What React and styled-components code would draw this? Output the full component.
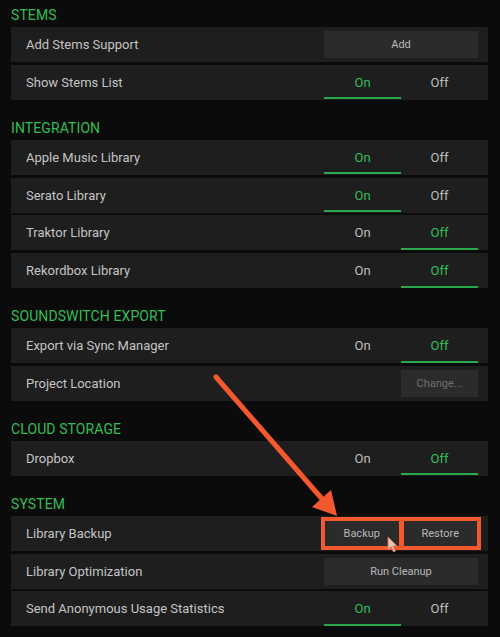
import React from "react";
import styled, { createGlobalStyle, css } from "styled-components";

const Global = createGlobalStyle`
  html, body { margin: 0; padding: 0; background: #0b0b0b; }
  body { font-family: Roboto, "Noto Sans", "Liberation Sans", sans-serif; }
`;

const GREEN = "#33bd58";
const ORANGE = "#f3582e";

const Page = styled.div`
  position: relative;
  width: 500px;
  height: 637px;
  overflow: hidden;
  box-sizing: border-box;
  padding: 4px 12px 0 11px;
  background: #0b0b0b;
`;

const Section = styled.section`
  margin-bottom: 17px;
`;

const SectionTitle = styled.h2`
  margin: 0 0 1px 0;
  height: 22px;
  line-height: 22px;
  font-size: 14px;
  font-weight: 400;
  color: ${GREEN};
  letter-spacing: 0.1px;
`;

const RowList = styled.div`
  display: flex;
  flex-direction: column;
  gap: 2.75px;
`;

const Row = styled.div`
  height: 35px;
  background: #1e1e1e;
  display: flex;
  align-items: center;
  justify-content: space-between;
  padding: 0 10px 0 15px;
`;

const Label = styled.span`
  font-size: 13px;
  color: #c4c4c4;
`;

const Control = styled.div`
  width: 154px;
  height: 100%;
  display: flex;
  align-items: center;
  gap: ${(p) => p.$gap || 0}px;
  justify-content: ${(p) => (p.$end ? "flex-end" : "flex-start")};
`;

const Option = styled.div`
  flex: 1;
  height: 100%;
  position: relative;
  display: flex;
  align-items: center;
  justify-content: center;
  font-size: 13px;
  color: ${(p) => (p.$active ? GREEN : "#bdbdbd")};
  ${(p) =>
    p.$active &&
    css`
      &::after {
        content: "";
        position: absolute;
        left: 0;
        right: 0;
        bottom: 0.5px;
        height: 2px;
        background: #2aa84c;
      }
    `}
`;

const Button = styled.div`
  flex: ${(p) => (p.$half ? "0 0 77px" : "1")};
  height: 27px;
  background: #2b2b2b;
  display: flex;
  align-items: center;
  justify-content: center;
  font-size: 11px;
  color: ${(p) => (p.$disabled ? "#6f6f6f" : "#b9b9b9")};
  ${(p) =>
    p.$marked &&
    css`
      outline: 4px solid ${ORANGE};
      outline-offset: -1px;
    `}
`;

const Overlay = styled.svg`
  position: absolute;
  left: 0;
  top: 0;
  pointer-events: none;
`;

const Toggle = ({ on }) => (
  <Control>
    <Option $active={on}>On</Option>
    <Option $active={!on}>Off</Option>
  </Control>
);

const sections = [
  {
    title: "STEMS",
    rows: [
      { label: "Add Stems Support", type: "button", text: "Add" },
      { label: "Show Stems List", type: "toggle", on: true },
    ],
  },
  {
    title: "INTEGRATION",
    rows: [
      { label: "Apple Music Library", type: "toggle", on: true },
      { label: "Serato Library", type: "toggle", on: true },
      { label: "Traktor Library", type: "toggle", on: false },
      { label: "Rekordbox Library", type: "toggle", on: false },
    ],
  },
  {
    title: "SOUNDSWITCH EXPORT",
    rows: [
      { label: "Export via Sync Manager", type: "toggle", on: false },
      { label: "Project Location", type: "change" },
    ],
  },
  {
    title: "CLOUD STORAGE",
    rows: [{ label: "Dropbox", type: "toggle", on: false }],
  },
  {
    title: "SYSTEM",
    rows: [
      { label: "Library Backup", type: "backup" },
      { label: "Library Optimization", type: "button", text: "Run Cleanup" },
      { label: "Send Anonymous Usage Statistics", type: "toggle", on: true },
    ],
  },
];

const renderControl = (r) => {
  switch (r.type) {
    case "toggle":
      return <Toggle on={r.on} />;
    case "button":
      return (
        <Control>
          <Button>{r.text}</Button>
        </Control>
      );
    case "change":
      return (
        <Control $end>
          <Button $half $disabled>
            Change...
          </Button>
        </Control>
      );
    case "backup":
      return (
        <Control $gap={3}>
          <Button $marked>Backup</Button>
          <Button $marked>Restore</Button>
        </Control>
      );
    default:
      return null;
  }
};

export default function App() {
  return (
    <>
      <Global />
      <Page>
        {sections.map((s) => (
          <Section key={s.title}>
            <SectionTitle>{s.title}</SectionTitle>
            <RowList>
              {s.rows.map((r) => (
                <Row key={r.label}>
                  <Label>{r.label}</Label>
                  {renderControl(r)}
                </Row>
              ))}
            </RowList>
          </Section>
        ))}
        <Overlay width="500" height="637" viewBox="0 0 500 637">
          <line
            x1="216"
            y1="377"
            x2="323"
            y2="500"
            stroke={ORANGE}
            strokeWidth="5"
            strokeLinecap="round"
          />
          <polygon points="312,507 331,490 337,516" fill={ORANGE} />
          <path
            d="M388 537 L388 550 L391 547 L393.5 552 L395.5 551 L393 546 L397 546 Z"
            fill="#e9c2b6"
            stroke="#d8714f"
            strokeWidth="0.8"
          />
        </Overlay>
      </Page>
    </>
  );
}
